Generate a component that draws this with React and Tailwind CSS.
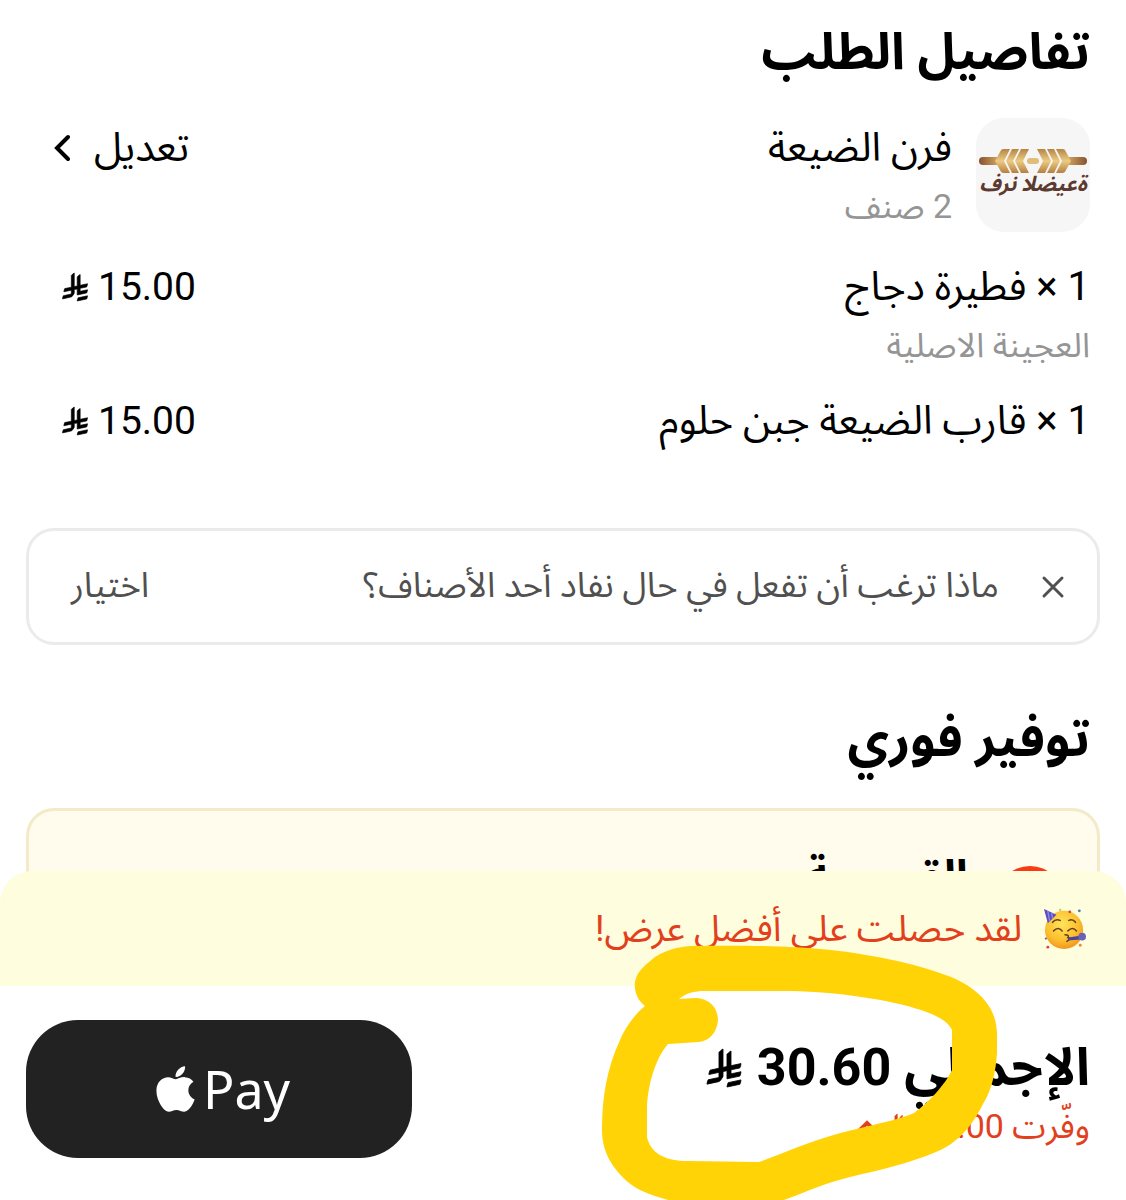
import { FaApple } from 'react-icons/fa'

const ITEMS = [
  { id: 1, qty: 1, name: 'فطيرة دجاج', note: 'العجينة الاصلية', price: '15.00' },
  { id: 2, qty: 1, name: 'قارب الضيعة جبن حلوم', note: '', price: '15.00' }
]

function Riyal({ className }) {
  return (
    <svg
      viewBox="0 0 1124.14 1256.39"
      className={className}
      fill="currentColor"
      stroke="currentColor"
      strokeWidth="28"
      overflow="visible"
      role="img"
      aria-label="ريال"
    >
      <path d="M699.62,1113.02h0c-20.06,44.48-33.32,92.75-38.4,143.37l424.51-90.24c20.06-44.47,33.31-92.75,38.4-143.37l-424.51,90.24Z" />
      <path d="M1085.73,895.8c20.06-44.47,33.32-92.75,38.4-143.37l-330.68,70.33v-135.2l292.27-62.11c20.06-44.47,33.32-92.75,38.4-143.37l-330.68,70.27V66.13c-50.67,28.45-95.67,66.32-132.25,110.99v403.35l-132.25,28.11V0c-50.67,28.44-95.67,66.32-132.25,110.99v525.69l-295.91,62.88c-20.06,44.47-33.33,92.75-38.42,143.37l334.33-71.05v170.26l-358.3,76.14c-20.06,44.47-33.32,92.75-38.4,143.37l375.04-79.7c30.53-6.35,56.77-24.4,73.83-49.24l68.78-101.97v-.02c7.14-10.55,11.3-23.27,11.3-36.97v-149.98l132.25-28.11v270.4l424.53-90.28Z" />
    </svg>
  )
}

function StoreLogo() {
  return (
    <div className="flex size-[114px] shrink-0 flex-col items-center rounded-[28px] bg-[#f6f6f6] pt-[30px]">
      <svg viewBox="0 0 110 26" className="h-[26px] w-[110px]" aria-hidden="true">
        <defs>
          <linearGradient id="handle" x1="0" x2="1" y1="0" y2="0">
            <stop offset="0" stopColor="#845230" />
            <stop offset="1" stopColor="#dcb066" />
          </linearGradient>
          <linearGradient id="wheat" x1="0" x2="0" y1="0" y2="1">
            <stop offset="0" stopColor="#b58546" />
            <stop offset="0.5" stopColor="#eccb84" />
            <stop offset="1" stopColor="#b58040" />
          </linearGradient>
          <g id="half">
            <rect x="1" y="9" width="22" height="8" rx="4" fill="url(#handle)" />
            <g fill="url(#wheat)">
              <path d="M25 1h7l-6 12 6 12h-7q-2 0-3-3l-5-9 5-9q1-3 3-3z" />
              <path d="M34 1h7l-6 12 6 12h-7l-6-12z" />
              <path d="M43 1h8l-6 12 6 12h-8l-6-12z" />
            </g>
          </g>
        </defs>
        <use href="#half" />
        <use href="#half" transform="translate(110 0) scale(-1 1)" />
        <rect x="49" y="10" width="12" height="6" rx="3" fill="#e0bd78" />
      </svg>
      <span
        dir="ltr"
        className="text-[21px] leading-[20px] font-bold whitespace-nowrap text-[#5d3a30] italic [unicode-bidi:bidi-override]"
      >
        فرن الضيعة
      </span>
    </div>
  )
}

function PartyFace() {
  return (
    <svg viewBox="0 0 44 44" className="size-[42px] shrink-0" aria-hidden="true">
      <defs>
        <radialGradient id="face" cx="0.45" cy="0.35" r="0.7">
          <stop offset="0" stopColor="#ffe45e" />
          <stop offset="0.6" stopColor="#fbc02f" />
          <stop offset="1" stopColor="#ee8f1c" />
        </radialGradient>
      </defs>
      <circle cx="21" cy="23" r="20" fill="url(#face)" />
      <path d="M0 1l13 6-9 9z" fill="#5a4fc0" />
      <path d="M4 3l2 11M8 5l1 6" stroke="#8f86ea" strokeWidth="1.5" />
      <g fill="none" stroke="#6b3f12" strokeWidth="1.6" strokeLinecap="round">
        <path d="M9 15q3-4 8-2M26 13q4-2 7 2" />
        <path d="M10 24q5-5 9 0M25 24q5-5 9 0" />
        <path d="M22 28q5 0 3 3q4 1-1 4" />
      </g>
      <path d="M25 31l13-2v4l-13 1z" fill="#4d4494" />
      <circle cx="40" cy="30" r="4" fill="#6a60b8" />
      <circle cx="27" cy="4" r="1.5" fill="#d8432f" />
      <circle cx="37" cy="3" r="1.5" fill="#4b7cb8" />
      <circle cx="4" cy="41" r="1.5" fill="#d2425a" />
      <circle cx="38" cy="39" r="1.5" fill="#e88a3a" />
      <circle cx="17" cy="2" r="1.2" fill="#e5b93a" />
      <circle cx="2" cy="32" r="1.2" fill="#6a60b8" />
    </svg>
  )
}

// Freehand marker loop around the total
function MarkerLoop() {
  return (
    <svg
      viewBox="600 940 400 260"
      className="pointer-events-none absolute right-[126px] bottom-0 h-[260px] w-[400px]"
      aria-hidden="true"
    >
      <path
        fill="#ffd305"
        fillRule="evenodd"
        d="M690 946C740 945 790 946 820 949C865 953 915 963 951 977C982 990 997 1010 997 1034V1053C996 1070 992 1090 983 1104C973 1124 960 1142 936 1152C910 1163 880 1170 850 1177C825 1183 806 1192 784 1200H668C650 1195 638 1190 629 1183C612 1168 602 1152 602 1130C602 1100 606 1070 620 1040C626 1026 636 1013 645 1006C637 1000 634 991 635 982C637 970 647 964 655 957C666 950 678 947 690 946Z
        M699 1042L668 1044C655 1059 648 1085 647 1107V1137C650 1152 664 1161 686 1161L759 1162C782 1154 800 1145 827 1137C858 1127 890 1123 914 1113C928 1103 945 1085 952 1070V1030C948 1021 936 1015 921 1010C890 1000 840 992 791 991H704C695 991 686 993 679 999L695 998C709 998 718 1008 718 1020C717 1033 709 1041 699 1042Z"
      />
    </svg>
  )
}

export default function App() {
  return (
    <div dir="rtl" lang="ar" className="min-h-screen bg-white font-['Roboto','Noto_Sans_Arabic','Noto_Sans',sans-serif] text-black">
      <main>
        <section className="px-9 pt-4">
          <h1 className="text-[51px] leading-[72px] font-bold">تفاصيل الطلب</h1>

          <div className="mt-[30px] flex items-start gap-6">
            <StoreLogo />
            <div className="flex-1">
              <h2 className="text-[40px] leading-[60px]">فرن الضيعة</h2>
              <p className="text-[34px] leading-[56px] text-[#959595]">2 صنف</p>
            </div>
            <button type="button" className="flex items-center gap-6 pl-[18px] text-[40px] leading-[60px]">
              تعديل
              <svg viewBox="0 0 16 28" className="h-7 w-4" fill="none" stroke="currentColor" strokeWidth="4" strokeLinecap="round" aria-hidden="true">
                <path d="M14 3L3 14l11 11" />
              </svg>
            </button>
          </div>

          <ul className="mt-[23px]">
            {ITEMS.map((item) => (
              <li key={item.id} className="mb-[18px] flex items-start justify-between">
                <div>
                  <p className="text-[40px] leading-[60px]">
                    {item.qty} × {item.name}
                  </p>
                  {item.note && <p className="text-[34px] leading-[56px] text-[#959595]">{item.note}</p>}
                </div>
                <p className="flex items-center gap-2.5 pl-[26px] text-[39px] leading-[60px]">
                  {item.price}
                  <Riyal className="h-7 w-[26px]" />
                </p>
              </li>
            ))}
          </ul>
        </section>

        <div className="mx-[26px] mt-[77px] flex h-[117px] items-center rounded-[28px] border-[3px] border-[#ebebeb] pr-8 pl-[42px] text-[35px] text-[#505050]">
          <button type="button" aria-label="إغلاق" className="ml-[42px]">
            <svg viewBox="0 0 24 24" className="size-6" fill="none" stroke="currentColor" strokeWidth="3" strokeLinecap="round" aria-hidden="true">
              <path d="M3 3l18 18M21 3L3 21" />
            </svg>
          </button>
          <p className="flex-1">ماذا ترغب أن تفعل في حال نفاد أحد الأصناف؟</p>
          <button type="button">اختيار</button>
        </div>

        <h2 className="mt-[58px] px-9 text-[51px] leading-[72px] font-bold">توفير فوري</h2>

        <div className="mx-[26px] mt-[33px] flex h-[180px] items-start gap-7 rounded-[28px] border-[3px] border-[#f2eac8] bg-[#fffbed] px-[33px] pt-[35px]">
          <span className="mt-5 size-[68px] rounded-full bg-[#f83b12]" />
          <h3 className="text-[44px] leading-[60px] font-bold">القسيمة</h3>
        </div>
      </main>

      <footer className="fixed inset-x-0 bottom-0">
        <div className="flex h-[115px] items-center gap-[22px] rounded-t-[32px] bg-[#fefdde] px-10 text-[37px] text-[#e2401c]">
          <PartyFace />
          <p>لقد حصلت على أفضل عرض!</p>
        </div>
        <div className="flex items-start justify-between bg-white pt-[34px] pr-9 pb-[42px] pl-[26px]">
          <div className="pt-[18px]">
            <p className="flex items-center gap-4 text-[52px] leading-[60px] font-bold">
              الإجمالي 30.60
              <Riyal className="h-[38px] w-[34px]" />
            </p>
            <button type="button" className="flex items-center gap-2.5 text-[34px] leading-[56px] text-[#e2401c]">
              وفّرت 15.00
              <Riyal className="h-6 w-[22px]" />
              <svg viewBox="0 0 20 14" className="h-[14px] w-5" fill="none" stroke="currentColor" strokeWidth="4" strokeLinecap="round" aria-hidden="true">
                <path d="M3 11l7-7 7 7" />
              </svg>
            </button>
          </div>
          <button
            type="button"
            dir="ltr"
            className="flex h-[138px] w-[386px] items-center justify-center gap-2 rounded-[52px] bg-[#222222] pl-2 font-['Noto_Sans',sans-serif] text-[52px] text-white"
          >
            <FaApple className="h-[52px] w-[39px]" aria-hidden="true" />
            Pay
          </button>
        </div>
        <MarkerLoop />
      </footer>
    </div>
  )
}
